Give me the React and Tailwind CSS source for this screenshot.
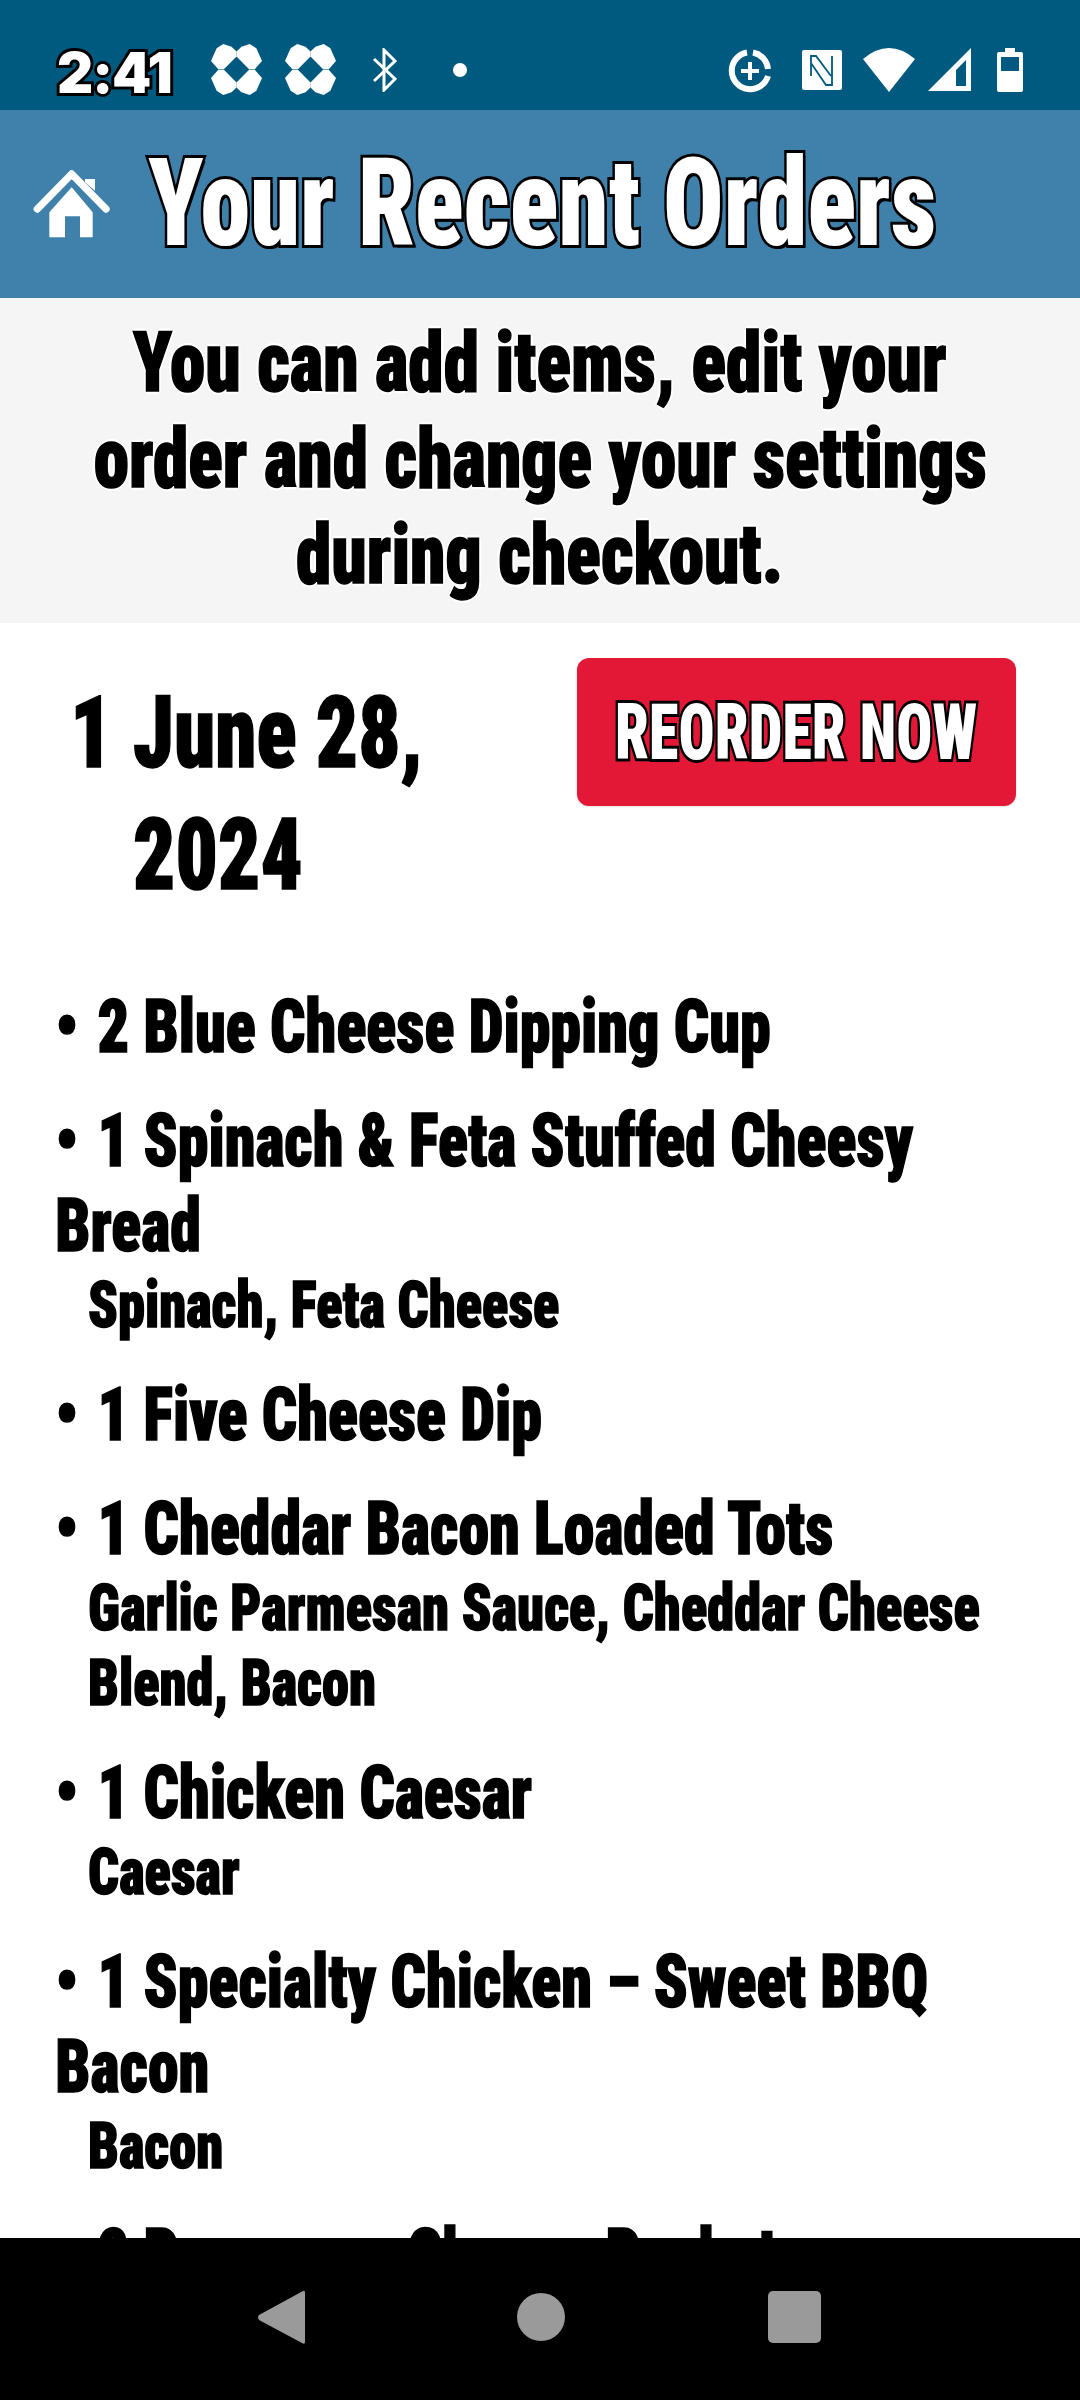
const condensed = "font-['Roboto_Condensed','Open_Sans',sans-serif] font-black"
const heavyBlack = '[-webkit-text-stroke:1.5px_#000]'
const whiteOutline = '[text-shadow:3px_0_0_#fff,-3px_0_0_#fff,0_3px_0_#fff,0_-3px_0_#fff]'
const blackOutline = '[-webkit-text-stroke:6px_#000] [paint-order:stroke_fill]'

const orderItems = [
  { qty: 2, name: 'Blue Cheese Dipping Cup' },
  { qty: 1, name: 'Spinach & Feta Stuffed Cheesy Bread', sub: 'Spinach, Feta Cheese' },
  { qty: 1, name: 'Five Cheese Dip' },
  { qty: 1, name: 'Cheddar Bacon Loaded Tots', sub: 'Garlic Parmesan Sauce, Cheddar Cheese Blend, Bacon' },
  { qty: 1, name: 'Chicken Caesar', sub: 'Caesar' },
  { qty: 1, name: 'Specialty Chicken – Sweet BBQ Bacon', sub: 'Bacon' },
  { qty: 2, name: 'Parmesan Cheese Packet' },
]

const Flower = () => (
  <svg viewBox="0 0 154 154" className="w-[51px] h-[51px] fill-white">
    {[
      'scale(1 1)',
      'translate(154 0) scale(-1 1)',
      'translate(0 154) scale(1 -1)',
      'translate(154 154) scale(-1 -1)',
    ].map((t) => (
      <polygon key={t} transform={t} points="39,76 22,76 0,51 17,13 37,0 62,8 77,23 77,38" />
    ))}
  </svg>
)

const StatusBar = () => (
  <div className="h-[110px] shrink-0 bg-[#005a80] flex items-start pt-[44px] pl-[57px] pr-[57px]">
    <span className="font-['Inter',sans-serif] font-black text-white text-[56px] leading-[58px] tracking-[-1px] w-[154px] [-webkit-text-stroke:6px_#000] [paint-order:stroke_fill]">
      2:41
    </span>
    <div className="flex gap-[23px]">
      <Flower />
      <Flower />
    </div>
    <svg viewBox="0 0 24 44" className="w-[24px] h-[44px] ml-[37px] mt-[4px] fill-none stroke-white stroke-[3]">
      <path d="M1 11 L22 31 L11 42 V2 L22 13 L1 33" />
    </svg>
    <div className="w-[14px] h-[14px] rounded-full bg-white ml-[56px] mt-[19px]" />
    <div className="flex-1" />
    <svg viewBox="0 0 44 44" className="w-[44px] h-[44px] mt-[5px] fill-none stroke-white">
      <path d="M19 3.5 A18.5 18.5 0 1 0 40 27" strokeWidth="6" />
      <path d="M25 3.5 A18.5 18.5 0 0 1 40 20" strokeWidth="6" />
      <path d="M22 13 V31 M13 22 H31" strokeWidth="4" />
    </svg>
    <svg viewBox="0 0 40 40" className="w-[40px] h-[40px] ml-[30px] mt-[6px]">
      <rect width="40" height="40" rx="2" fill="#fff" />
      <path d="M9 26 V6 H14 L29 26 M9 13 L24 35 H30 V6" fill="none" stroke="#005a80" strokeWidth="1.8" />
    </svg>
    <svg viewBox="0 0 52 44" className="w-[52px] h-[44px] ml-[21px] mt-[4px] fill-white">
      <path d="M0 11 Q26 -11 52 11 L26 44 Z" />
    </svg>
    <svg viewBox="0 0 43 43" className="w-[43px] h-[43px] ml-[13px] mt-[4px] fill-white">
      <path fillRule="evenodd" d="M43 0 V43 H0 Z M38 12 L28 22 V38 H38 Z" />
    </svg>
    <svg viewBox="0 0 26 44" className="w-[26px] h-[44px] ml-[26px] mt-[4px] fill-white">
      <path fillRule="evenodd" d="M8 0 H18 V4 H24 Q26 4 26 6 V42 Q26 44 24 44 H2 Q0 44 0 42 V6 Q0 4 2 4 H8 Z M4 9 V23 H22 V9 Z" />
    </svg>
  </div>
)

const HomeIcon = () => (
  <svg viewBox="0 0 330 270" className="w-[110px] h-[90px] shrink-0 fill-white">
    <polygon points="195,60 225,60 225,95 195,70" />
    <path d="M52 150 L155 45 L258 150" fill="none" stroke="#fff" strokeWidth="22" strokeLinecap="round" strokeLinejoin="round" />
    <polygon points="88,235 88,160 155,85 218,160 218,235 180,235 180,172 135,172 135,235" />
  </svg>
)

const Header = () => (
  <div className="h-[188px] shrink-0 bg-[#3f81ab] flex items-center pl-[20px]">
    <HomeIcon />
    <h1 className={`${condensed} ml-[18px] text-white text-[122px] leading-none whitespace-nowrap origin-left scale-x-[0.825] ${blackOutline} [text-shadow:3px_3px_0_#000]`}>
      Your Recent Orders
    </h1>
  </div>
)

const Notice = () => (
  <div className="h-[325px] shrink-0 bg-[#f5f5f6] flex flex-col items-center pt-[17px]">
    {['You can add items, edit your', 'order and change your settings', 'during checkout.'].map((line) => (
      <p key={line} className={`${condensed} ${heavyBlack} ${whiteOutline} text-[84px] leading-[96px] whitespace-nowrap scale-x-[0.85]`}>
        {line}
      </p>
    ))}
  </div>
)

const OrderHead = () => (
  <div className="flex pt-[35px] pl-[70px] pr-[64px] h-[361px] shrink-0">
    <div className={`${condensed} ${heavyBlack} flex text-[100px] leading-[122px] pt-[14px] w-[507px] origin-left scale-x-[0.83]`}>
      <span className="w-[76px]">1</span>
      <span className="w-[400px]">June 28, 2024</span>
    </div>
    <button className="w-[439px] h-[148px] shrink-0 bg-[#e31837] rounded-[12px] shadow-sm flex items-center justify-center pt-[2px]">
      <span className={`${condensed} text-white text-[78px] leading-none whitespace-nowrap scale-x-[0.77] ${blackOutline}`}>
        REORDER NOW
      </span>
    </button>
  </div>
)

const OrderList = () => (
  <ul className={`${condensed} ${heavyBlack} pl-[66px] w-[1200px] origin-left scale-x-[0.838]`}>
    {orderItems.map((item) => (
      <li key={item.name} className="mb-[29px] w-[1110px]">
        <div className="text-[74px] leading-[85px]">
          <span className="mr-[6px]">•</span> {item.qty} {item.name}
        </div>
        {item.sub && <div className="text-[65px] leading-[75px] pl-[39px]">{item.sub}</div>}
      </li>
    ))}
  </ul>
)

const NavBar = () => (
  <div className="h-[162px] shrink-0 bg-black flex items-center pl-[257px] pb-[4px]">
    <svg viewBox="0 0 48 55" className="w-[48px] h-[55px] fill-[#9a9a9a]">
      <path d="M46 1 Q48 0 48 3 V52 Q48 55 45 53 L2 30 Q0 27 2 25 Z" />
    </svg>
    <div className="w-[48px] h-[48px] ml-[212px] rounded-full bg-[#9a9a9a]" />
    <div className="w-[53px] h-[52px] ml-[203px] rounded-[5px] bg-[#9a9a9a]" />
  </div>
)

export default function App() {
  return (
    <div className="h-[2400px] w-[1080px] overflow-hidden flex flex-col bg-white text-black">
      <StatusBar />
      <Header />
      <Notice />
      <div className="flex-1 min-h-0 overflow-hidden flex flex-col">
        <OrderHead />
        <OrderList />
      </div>
      <NavBar />
    </div>
  )
}
